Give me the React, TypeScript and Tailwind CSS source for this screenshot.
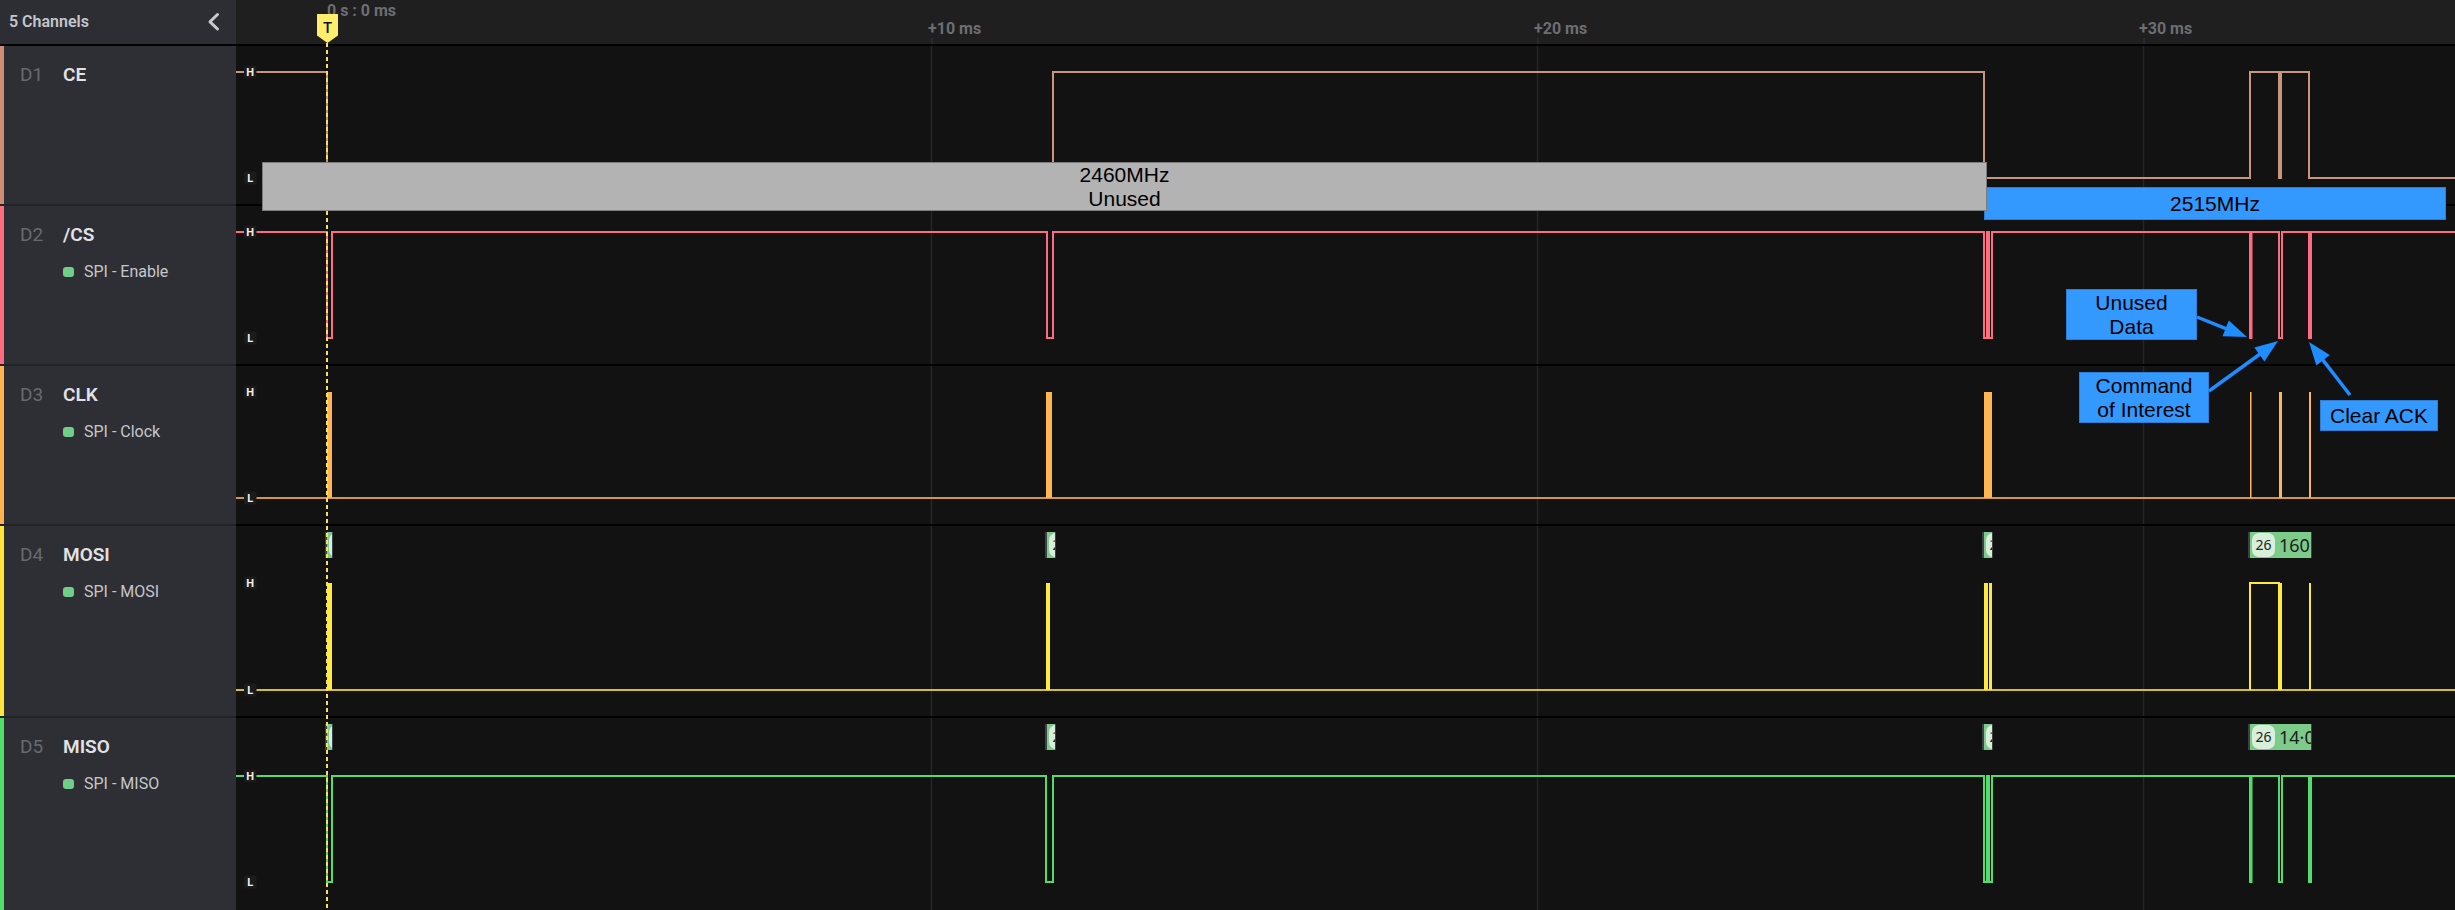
import React from "react";

const W = 2219;
const GRID = [695, 1301, 1907];

type Bubble = { left: number; width: number; text: string };

type RowDef = {
  id: string;
  name: string;
  sub?: string;
  stripe: string;
  rowH: string;
  h: number;
  hy: number;
  ly: number;
  kind: "ce" | "cs" | "clk" | "mosi" | "miso";
  bubbles?: Bubble[];
};

const rows: RowDef[] = [
  { id: "D1", name: "CE", stripe: "bg-[#cf8e73]", rowH: "h-[158px]", h: 158, hy: 26, ly: 132, kind: "ce" },
  { id: "D2", name: "/CS", sub: "SPI - Enable", stripe: "bg-[#ff6b81]", rowH: "h-[158px]", h: 158, hy: 26, ly: 132, kind: "cs" },
  { id: "D3", name: "CLK", sub: "SPI - Clock", stripe: "bg-[#ffb24f]", rowH: "h-[158px]", h: 158, hy: 26, ly: 132, kind: "clk" },
  {
    id: "D4", name: "MOSI", sub: "SPI - MOSI", stripe: "bg-[#ffe53a]", rowH: "h-[190px]", h: 190, hy: 57, ly: 164, kind: "mosi",
    bubbles: [
      { left: 89, width: 8, text: "160" },
      { left: 809, width: 11, text: "160" },
      { left: 1746, width: 11, text: "160" },
      { left: 2012, width: 64, text: "160" },
    ],
  },
  {
    id: "D5", name: "MISO", sub: "SPI - MISO", stripe: "bg-[#4fe06a]", rowH: "h-[192px]", h: 192, hy: 58, ly: 164, kind: "miso",
    bubbles: [
      { left: 89, width: 8, text: "14·00" },
      { left: 809, width: 11, text: "14·00" },
      { left: 1746, width: 11, text: "14·00" },
      { left: 2012, width: 64, text: "14·00" },
    ],
  },
];

function stepPath(startHigh: boolean, xs: number[], hy: number, ly: number) {
  let high = startHigh;
  let d = `M0 ${high ? hy : ly}`;
  for (const x of xs) {
    d += ` H${x}`;
    high = !high;
    d += ` V${high ? hy : ly}`;
  }
  d += ` H${W}`;
  return d;
}

const CS_DIPS: [number, number][] = [
  [91, 96], [811, 817], [1748, 1751], [1753, 1756], [2014, 2015.5], [2043, 2046], [2073, 2075],
];
const MISO_DIPS: [number, number][] = [
  [91, 96], [810, 817], [1748, 1751], [1753, 1756], [2014, 2015.5], [2043, 2046], [2073, 2075],
];
const CLK_BURSTS: [number, number][] = [
  [91, 96], [810, 816], [1748, 1756], [2014, 2015.5], [2043, 2046], [2073, 2075],
];
const MOSI_SPIKES: [number, number][] = [
  [91, 96], [810, 814], [1748, 1752], [1753, 1756], [2042, 2046], [2073, 2075],
];

function Wave({ r }: { r: RowDef }) {
  const { hy, ly, h } = r;
  let body: React.ReactNode = null;
  if (r.kind === "ce") {
    body = (
      <path
        d={stepPath(true, [91, 817, 1748, 2014, 2043, 2045, 2073], hy, ly)}
        fill="none"
        stroke="#c9967b"
        strokeWidth={2}
      />
    );
  } else if (r.kind === "cs" || r.kind === "miso") {
    const dips = r.kind === "cs" ? CS_DIPS : MISO_DIPS;
    body = (
      <path
        d={stepPath(true, dips.flat(), hy, ly)}
        fill="none"
        stroke={r.kind === "cs" ? "#ff6b81" : "#52dc6b"}
        strokeWidth={2}
      />
    );
  } else if (r.kind === "clk") {
    body = (
      <g>
        <line x1={0} y1={ly} x2={W} y2={ly} stroke="#d6963f" strokeWidth={2} />
        {CLK_BURSTS.map(([a, b], i) => (
          <rect key={i} x={a} y={hy} width={Math.max(b - a, 1.5)} height={ly - hy} fill="#ffb552" />
        ))}
      </g>
    );
  } else if (r.kind === "mosi") {
    body = (
      <g>
        <line x1={0} y1={ly} x2={W} y2={ly} stroke="#d4bf2c" strokeWidth={2} />
        <path d={`M2014 ${ly} V${hy} H2044`} fill="none" stroke="#ffe93b" strokeWidth={2} />
        {MOSI_SPIKES.map(([a, b], i) => (
          <rect key={i} x={a} y={hy} width={Math.max(b - a, 1.5)} height={ly - hy} fill="#ffe93b" />
        ))}
      </g>
    );
  }
  return (
    <svg width={W} height={h} className="absolute left-0 top-0 block">
      {GRID.map((x) => (
        <line key={x} x1={x + 0.5} y1={0} x2={x + 0.5} y2={h} stroke="#262626" strokeWidth={1.5} />
      ))}
      {body}
      {[
        { t: "H", y: hy },
        { t: "L", y: ly },
      ].map((l) => (
        <g key={l.t}>
          <rect x={8} y={l.y - 6.5} width={12.5} height={13} rx={2} fill="#1b1b1b" />
          <text
            x={14.2}
            y={l.y + 4}
            textAnchor="middle"
            fontSize={11}
            fontWeight={700}
            fill="#f2f2f2"
            fontFamily="Roboto, sans-serif"
          >
            {l.t}
          </text>
        </g>
      ))}
    </svg>
  );
}

function DataBubble({ b }: { b: Bubble }) {
  return (
    <div
      className="absolute top-[6px] h-[26px] flex overflow-hidden bg-[#7dcb8b] border-l-2 border-r border-[#3d4145]"
      style={{ left: b.left, width: b.width }}
    >
      <div className="ml-[2px] mt-[1px] h-[24px] w-[23px] shrink-0 rounded-[7px] bg-[#d7efdb] flex items-center justify-center text-[14px] leading-[14px] text-[#222] font-['Noto_Sans',sans-serif]">
        26
      </div>
      <div className="ml-[4px] shrink-0 whitespace-nowrap text-[18px] leading-[26px] text-[#1c1c1c] font-['Noto_Sans',sans-serif]">
        {b.text}
      </div>
    </div>
  );
}

function Arrow({ x1, y1, x2, y2 }: { x1: number; y1: number; x2: number; y2: number }) {
  const dx = x2 - x1;
  const dy = y2 - y1;
  const len = Math.hypot(dx, dy);
  const ux = dx / len;
  const uy = dy / len;
  const hl = 23;
  const hw = 8.5;
  const bx = x2 - ux * hl;
  const by = y2 - uy * hl;
  const px = -uy * hw;
  const py = ux * hw;
  return (
    <g>
      <line x1={x1} y1={y1} x2={bx + ux * 3} y2={by + uy * 3} stroke="#1f8cff" strokeWidth={3.5} />
      <polygon points={`${x2},${y2} ${bx + px},${by + py} ${bx - px},${by - py}`} fill="#1f8cff" />
    </g>
  );
}

function Separator() {
  return (
    <div className="flex h-[2px] shrink-0">
      <div className="w-[236px] bg-[#222327]" />
      <div className="flex-1 bg-black" />
    </div>
  );
}

export default function App() {
  return (
    <div className="relative w-[2455px] h-[910px] overflow-hidden bg-[#121212] font-['Roboto',sans-serif]">
      <div className="flex flex-col h-full">
        {/* Header */}
        <div className="flex h-[44px] shrink-0">
          <div className="w-[236px] shrink-0 bg-[#2d2e33] flex items-center justify-between pl-[9px]">
            <span className="text-[16px] leading-[16px] font-semibold text-[#c5c6cb]">5 Channels</span>
            <svg width="26" height="44" viewBox="0 0 26 44" className="block mr-[10px]">
              <polyline
                points="17.5,14.5 10,21.8 17.5,29"
                fill="none"
                stroke="#c8c9ce"
                strokeWidth={3}
                strokeLinecap="round"
                strokeLinejoin="round"
              />
            </svg>
          </div>
          <div className="relative flex-1 bg-[#1f1f1f]">
            <div className="absolute left-[91px] top-[3px] text-[16px] leading-[16px] font-bold text-[#6d6e72] whitespace-nowrap">
              0 s : 0 ms
            </div>
            <div className="absolute left-[692px] top-[21px] text-[16px] leading-[16px] font-bold text-[#6d6e72] whitespace-nowrap">
              +10 ms
            </div>
            <div className="absolute left-[1298px] top-[21px] text-[16px] leading-[16px] font-bold text-[#6d6e72] whitespace-nowrap">
              +20 ms
            </div>
            <div className="absolute left-[1903px] top-[21px] text-[16px] leading-[16px] font-bold text-[#6d6e72] whitespace-nowrap">
              +30 ms
            </div>
            <div className="absolute left-[695px] top-[38px] w-[1.5px] h-[6px] bg-[#2a2a2a]" />
            <div className="absolute left-[1301px] top-[38px] w-[1.5px] h-[6px] bg-[#2a2a2a]" />
            <div className="absolute left-[1907px] top-[38px] w-[1.5px] h-[6px] bg-[#2a2a2a]" />
            <svg width="22" height="30" viewBox="0 0 22 30" className="absolute left-[81px] top-[14px] block">
              <polygon points="0,0 21,0 21,21.5 10.5,29 0,21.5" fill="#ffee6b" />
              <text
                x={10.5}
                y={19.3}
                textAnchor="middle"
                fontSize={15}
                fontWeight={500}
                fill="#111"
                fontFamily="Roboto, sans-serif"
              >
                T
              </text>
            </svg>
          </div>
        </div>
        <div className="h-[2px] shrink-0 bg-black" />

        {rows.map((r, i) => (
          <React.Fragment key={r.id}>
            {i > 0 && <Separator />}
            <div className={`flex shrink-0 ${r.rowH}`}>
              <div className="w-[236px] shrink-0 flex bg-[#2e2f34]">
                <div className={`w-[4px] shrink-0 ${r.stripe}`} />
                <div className="pl-[16px] pt-[19px]">
                  <div className="flex items-baseline text-[19px] leading-[20px]">
                    <span className="w-[43px] text-[#68696e]">{r.id}</span>
                    <span className="font-semibold text-[#e2e2e5]">{r.name}</span>
                  </div>
                  {r.sub && (
                    <div className="mt-[19px] ml-[43px] flex items-center gap-[10px] text-[16px] leading-[16px] text-[#c6c7cb] whitespace-nowrap">
                      <span className="w-[11px] h-[10px] rounded-[3px] bg-[#6fcf87]" />
                      {r.sub}
                    </div>
                  )}
                </div>
              </div>
              <div className="relative flex-1 overflow-hidden">
                <Wave r={r} />
                {r.bubbles?.map((b, j) => (
                  <DataBubble key={j} b={b} />
                ))}
              </div>
            </div>
          </React.Fragment>
        ))}
      </div>

      {/* Trigger line */}
      <svg width="2" height="867" className="absolute left-[326px] top-[43px] block pointer-events-none">
        <line x1={1} y1={0} x2={1} y2={867} stroke="#f6e35a" strokeWidth={2} strokeDasharray="4 3" />
      </svg>

      {/* Frequency annotations */}
      <div className="absolute left-[1984px] top-[187px] w-[462px] h-[33px] bg-[#3399ff] border border-[#2b7dd5] flex items-center justify-center text-[21px] leading-[24px] text-black font-['Liberation_Sans',Arial,sans-serif]">
        2515MHz
      </div>
      <div className="absolute left-[262px] top-[162px] w-[1725px] h-[49px] bg-[#b3b3b3] border border-[#7c7c7c] flex flex-col items-center justify-center text-[21px] leading-[24px] text-black font-['Liberation_Sans',Arial,sans-serif]">
        <span>2460MHz</span>
        <span>Unused</span>
      </div>

      {/* Callouts */}
      <div className="absolute left-[2066px] top-[289px] w-[131px] h-[51px] bg-[#3399ff] border border-[#2b7dd5] flex flex-col items-center justify-center text-[21px] leading-[24px] text-black font-['Liberation_Sans',Arial,sans-serif]">
        <span>Unused</span>
        <span>Data</span>
      </div>
      <div className="absolute left-[2079px] top-[372px] w-[130px] h-[51px] bg-[#3399ff] border border-[#2b7dd5] flex flex-col items-center justify-center text-[21px] leading-[24px] text-black font-['Liberation_Sans',Arial,sans-serif]">
        <span>Command</span>
        <span>of Interest</span>
      </div>
      <div className="absolute left-[2320px] top-[400px] w-[118px] h-[31px] bg-[#3399ff] border border-[#2b7dd5] flex items-center justify-center text-[21px] leading-[24px] text-black font-['Liberation_Sans',Arial,sans-serif]">
        Clear ACK
      </div>

      <svg width="2455" height="910" className="absolute left-0 top-0 block pointer-events-none">
        <Arrow x1={2197} y1={317} x2={2247} y2={337} />
        <Arrow x1={2209} y1={391} x2={2278} y2={341} />
        <Arrow x1={2350} y1={395} x2={2309} y2={342} />
      </svg>
    </div>
  );
}
